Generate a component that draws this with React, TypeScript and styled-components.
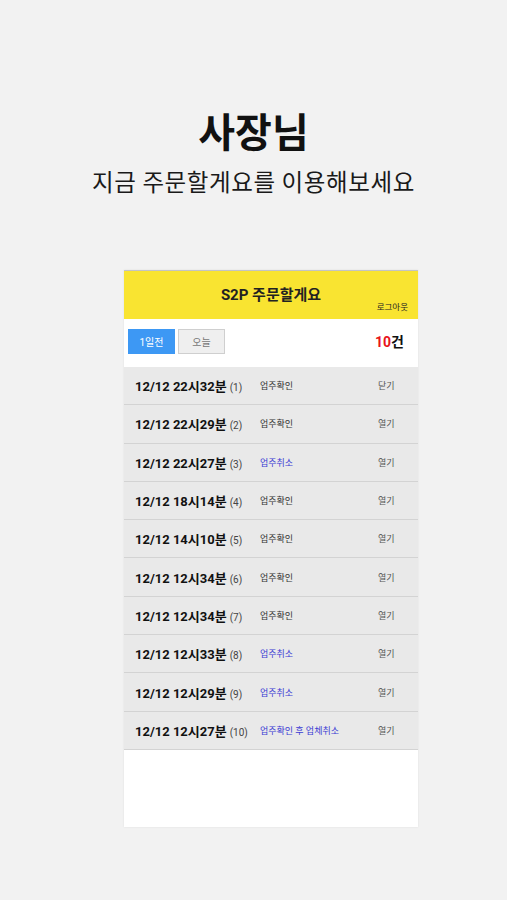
import React from 'react';
import styled, { createGlobalStyle } from 'styled-components';

const GlobalStyle = createGlobalStyle`
  body {
    margin: 0;
    background: #f2f2f2;
    font-family: Roboto, "Noto Sans CJK KR", sans-serif;
  }
`;

const Page = styled.div`
  width: 507px;
  height: 900px;
  padding-top: 106px;
  box-sizing: border-box;
  background: #f2f2f2;
`;

const Hero = styled.div`
  display: flex;
  flex-direction: column;
  align-items: center;
  color: #111;
  font-family: "Noto Sans CJK KR", sans-serif;
`;

const Title = styled.h1`
  margin: 0;
  font-size: 40px;
  line-height: 48px;
  font-weight: 700;
`;

const Subtitle = styled.p`
  margin: 12px 0 0;
  font-size: 23.5px;
  line-height: 30px;
  font-weight: 400;
  letter-spacing: 0.6px;
  color: #1a1a1a;
`;

const Card = styled.div`
  margin: 74px 0 0 124px;
  width: 294px;
  height: 557px;
  background: #fff;
  border-top: 1px solid #c4c4c4;
  box-shadow: 0 0 2px rgba(0, 0, 0, 0.08);
  box-sizing: border-box;
  display: flex;
  flex-direction: column;
`;

const Header = styled.div`
  height: 48px;
  background: #f9e431;
  display: flex;
  flex-direction: column;
  box-sizing: border-box;
  padding: 14px 10px 0;
`;

const HeaderTitle = styled.div`
  text-align: center;
  font-size: 15px;
  line-height: 20px;
  font-weight: 700;
  color: #222;
`;

const Logout = styled.div`
  align-self: flex-end;
  margin-top: -3px;
  font-size: 8.5px;
  line-height: 11px;
  color: #222;
`;

const Controls = styled.div`
  height: 48px;
  display: flex;
  align-items: flex-start;
  padding: 10px 14px 0 4px;
  box-sizing: border-box;
  gap: 3px;
`;

const DayButton = styled.button<{ $active?: boolean }>`
  width: 47px;
  height: 25px;
  padding: 0;
  font-family: inherit;
  font-size: 10px;
  border: 1px solid ${(p) => (p.$active ? '#3d98f4' : '#cfcfcf')};
  background: ${(p) => (p.$active ? '#3d98f4' : '#efefef')};
  color: ${(p) => (p.$active ? '#fff' : '#777')};
`;

const Count = styled.div`
  margin-left: auto;
  margin-top: 2px;
  font-size: 14px;
  line-height: 22px;
  font-weight: 700;
  color: #111;
  span {
    color: #e8141b;
  }
`;

const Row = styled.div`
  height: 38.3px;
  box-sizing: border-box;
  display: grid;
  grid-template-columns: 125px 118px 1fr;
  align-items: center;
  padding-left: 11px;
  background: #e9e9e9;
  border-bottom: 1px solid #d3d3d3;
`;

const DateText = styled.div`
  font-size: 13px;
  font-weight: 700;
  color: #111;
  white-space: nowrap;
  small {
    font-size: 10px;
    font-weight: 400;
    color: #444;
    margin-left: 3px;
  }
`;

const Status = styled.div<{ $cancel?: boolean }>`
  font-size: 9px;
  color: ${(p) => (p.$cancel ? '#3b3bd4' : '#333')};
  white-space: nowrap;
`;

const Action = styled.div`
  font-size: 9px;
  color: #555;
`;

const orders = [
  { time: '22시32분', status: '업주확인', action: '닫기' },
  { time: '22시29분', status: '업주확인', action: '열기' },
  { time: '22시27분', status: '업주취소', action: '열기', cancel: true },
  { time: '18시14분', status: '업주확인', action: '열기' },
  { time: '14시10분', status: '업주확인', action: '열기' },
  { time: '12시34분', status: '업주확인', action: '열기' },
  { time: '12시34분', status: '업주확인', action: '열기' },
  { time: '12시33분', status: '업주취소', action: '열기', cancel: true },
  { time: '12시29분', status: '업주취소', action: '열기', cancel: true },
  { time: '12시27분', status: '업주확인 후 업체취소', action: '열기', cancel: true },
];

export default function App() {
  return (
    <Page>
      <GlobalStyle />
      <Hero>
        <Title>사장님</Title>
        <Subtitle>지금 주문할게요를 이용해보세요</Subtitle>
      </Hero>
      <Card>
        <Header>
          <HeaderTitle>S2P 주문할게요</HeaderTitle>
          <Logout>로그아웃</Logout>
        </Header>
        <Controls>
          <DayButton $active>1일전</DayButton>
          <DayButton>오늘</DayButton>
          <Count>
            <span>10</span>건
          </Count>
        </Controls>
        {orders.map((o, i) => (
          <Row key={i}>
            <DateText>
              12/12 {o.time}
              <small>({i + 1})</small>
            </DateText>
            <Status $cancel={o.cancel}>{o.status}</Status>
            <Action>{o.action}</Action>
          </Row>
        ))}
      </Card>
    </Page>
  );
}
